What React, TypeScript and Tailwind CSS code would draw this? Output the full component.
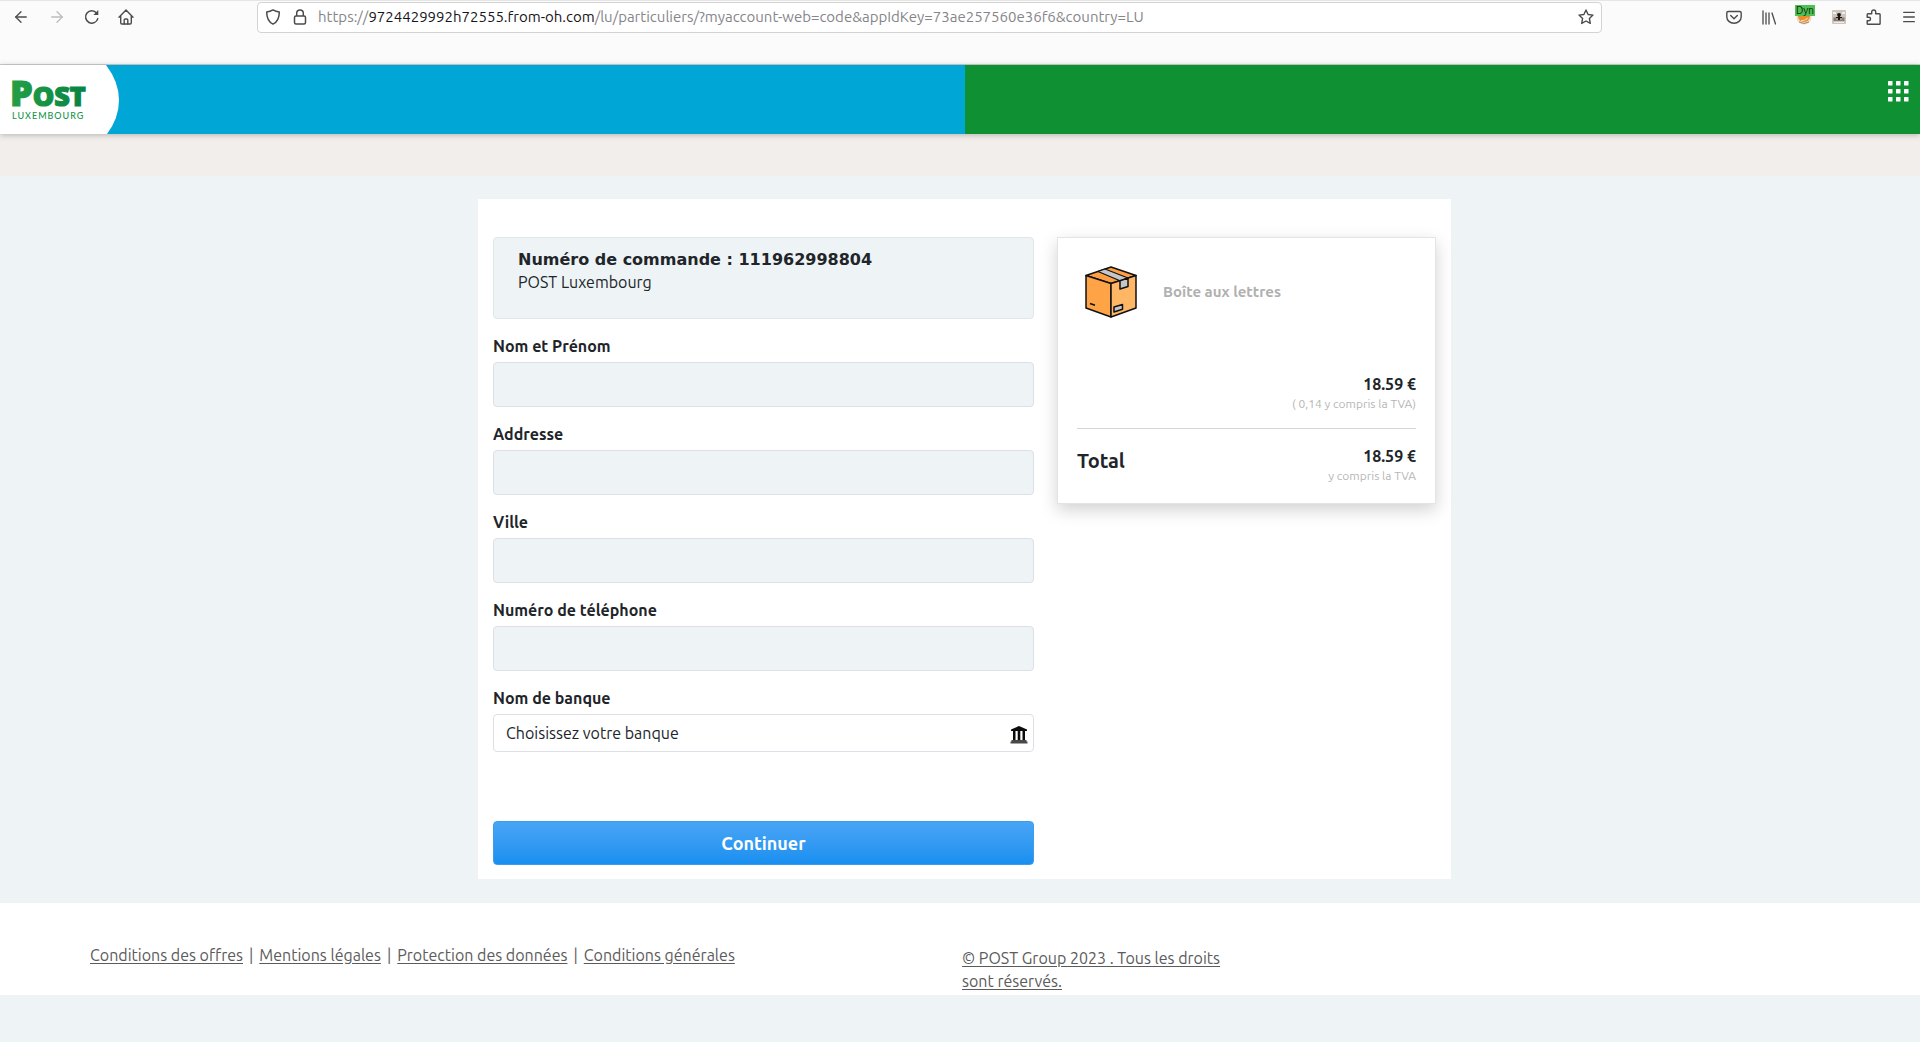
import React from "react";
import { ArrowLeft, ArrowRight, Menu } from "lucide-react";

const FIELDS = [
  { id: "name", label: "Nom et Prénom" },
  { id: "address", label: "Addresse" },
  { id: "city", label: "Ville" },
  { id: "phone", label: "Numéro de téléphone" },
];

const FOOTER_LINKS = [
  "Conditions des offres",
  "Mentions légales",
  "Protection des données",
  "Conditions générales",
];

function ReloadIcon() {
  return (
    <svg viewBox="0 0 16 16" className="w-4 h-4" fill="none" stroke="currentColor" strokeWidth="1.5" strokeLinecap="round">
      <path d="M13.8 9.6A6.2 6.2 0 1 1 12.6 4" />
      <path d="M14.3 1v5H9.4z" fill="currentColor" stroke="none" />
    </svg>
  );
}

function HomeIcon() {
  return (
    <svg viewBox="0 0 16 16" className="w-4 h-4" fill="none" stroke="currentColor" strokeWidth="1.4" strokeLinejoin="round" strokeLinecap="round">
      <path d="M1 8.2L8 1l7 7.2M2.7 7v6.8q0 1.2 1.2 1.2h8.2q1.2 0 1.2-1.2V7" />
      <path d="M6.2 15v-4q0-1 1-1h1.6q1 0 1 1v4" />
    </svg>
  );
}

function ShieldIcon() {
  return (
    <svg viewBox="0 0 16 16" className="w-4 h-4" fill="none" stroke="currentColor" strokeWidth="1.5" strokeLinejoin="round">
      <path d="M8 .9c2 1.3 4 1.9 6.3 2 0 5.5-1 9.6-6.3 12.2C2.7 12.5 1.7 8.4 1.7 2.9 4 2.8 6 2.2 8 .9z" />
    </svg>
  );
}

function LockIcon() {
  return (
    <svg viewBox="0 0 16 16" className="w-4 h-4" fill="none" stroke="currentColor" strokeWidth="1.5">
      <rect x="2.5" y="7" width="11" height="8" rx="1.5" />
      <path d="M4.7 7V4.2a3.3 3.3 0 0 1 6.6 0V7" />
    </svg>
  );
}

function StarIcon() {
  return (
    <svg viewBox="0 0 16 16" className="w-4 h-4" fill="none" stroke="currentColor" strokeWidth="1.4" strokeLinejoin="round">
      <path d="M8 1l2.1 4.5 4.9.6-3.6 3.4.9 4.9L8 12l-4.3 2.4.9-4.9L1 6.1l4.9-.6z" />
    </svg>
  );
}

function PocketIcon() {
  return (
    <svg viewBox="0 0 16 16" className="w-4 h-4" fill="none" stroke="currentColor" strokeWidth="1.4" strokeLinecap="round" strokeLinejoin="round">
      <path d="M2.2 2.5h11.6q1.4 0 1.4 1.4v3.8a7.2 6.6 0 0 1-14.4 0V3.9q0-1.4 1.4-1.4z" />
      <path d="M4.7 6.5L8 9.7l3.3-3.2" />
    </svg>
  );
}

function LibraryIcon() {
  return (
    <svg viewBox="0 0 16 16" className="w-4 h-4" fill="none" stroke="currentColor" strokeWidth="1.3" strokeLinecap="round">
      <path d="M2 2v13M5 4v11M8 4v11M11 4l3.5 11" />
    </svg>
  );
}

function MonkeyIcon() {
  return (
    <svg viewBox="0 0 16 16" className="w-4 h-4">
      <circle cx="8" cy="8" r="7.5" fill="#ead9c8" />
      <circle cx="8" cy="7" r="6" fill="#ee8d27" />
      <path d="M5 11.5q4 1 6.5-2.5" fill="none" stroke="#f7d9b4" strokeWidth="1.2" />
      <path d="M3 13q5 3 10 0" fill="none" stroke="#a98a72" />
    </svg>
  );
}

function SpyIcon() {
  return (
    <svg viewBox="0 0 16 16" className="w-4 h-4">
      <rect x="1" y="1" width="14" height="14" rx="1" fill="#cfc4bc" />
      <path d="M2 3h3v2H2zM11 3h3v2h-3zM3 13h10v1H3z" fill="#f3eeea" />
      <path d="M2.5 8.5H5v2h6v-2h2.500V12h-11z" fill="#857a74" />
      <circle cx="8" cy="5.8" r="1.9" fill="#171717" />
      <path d="M7 6h2v5H7zM5 8h6v1.300H5z" fill="#171717" />
    </svg>
  );
}

function PuzzleIcon() {
  return (
    <svg viewBox="0 0 16 16" className="w-4 h-4" fill="none" stroke="currentColor" strokeWidth="1.4" strokeLinejoin="round">
      <path d="M2 15.2q-.8 0-.8-.8v-2.7h1.6a1.7 1.7 0 0 0 0-3.500H1.2V5.500q0-.8.8-.8h3.700V3a2 2 0 0 1 4 0v1.700h3.600q.8 0 .8.8v8.900q0 .8-.8.8z" />
    </svg>
  );
}

function AppsIcon() {
  return (
    <svg viewBox="0 0 21 21" className="w-[21px] h-[21px]" fill="#fff">
      {[0, 8, 16].map((y) =>
        [0, 8, 16].map((x) => <rect key={`${x}-${y}`} x={x} y={y} width="4.5" height="4.5" rx=".5" />)
      )}
    </svg>
  );
}

function PostLogo() {
  return (
    <svg viewBox="0 0 120 69" className="w-[120px] h-[69px]" role="img" aria-label="POST Luxembourg">
      <defs>
        <linearGradient id="logo" x1="0" x2="1">
          <stop offset="0" stopColor="#23a045" />
          <stop offset="1" stopColor="#078344" />
        </linearGradient>
      </defs>
      <path d="M0 0H106Q119 17 119 35T107 69H0z" fill="#fff" />
      <text x="10" y="41" fontFamily="'Open Sans', sans-serif" fontWeight="800" fill="url(#logo)" stroke="url(#logo)" strokeWidth="1.2">
        <tspan fontSize="36">P</tspan>
        <tspan fontSize="27">OST</tspan>
      </text>
      <text x="12" y="54" fontFamily="Lato, sans-serif" fontSize="9" fontWeight="500" letterSpacing="1" fill="#16954a">
        LUXEMBOURG
      </text>
    </svg>
  );
}

function ParcelIcon() {
  return (
    <svg viewBox="0 0 52 52" className="w-[52px] h-[52px]" stroke="#111" strokeLinejoin="round">
      <path d="M1 9.5L26 1l25 8.5L26 17.5z" fill="#ff9f43" strokeWidth="1.5" />
      <path d="M1 9.5l25 8V51L1 42z" fill="#ffa347" strokeWidth="1.5" />
      <path d="M51 9.5l-25 8V51l25-9z" fill="#ffb766" strokeWidth="1.5" />
      <path d="M13 5.5L20 3l23 9-8 2.7z" fill="#c5c6ca" strokeWidth="1.2" />
      <path d="M35 14.7l8-2.7v8.5L35 23z" fill="#c5c6ca" strokeWidth="1.5" />
      <path d="M29 41l8.5-2.5v4.7L29 46z" fill="#c5c6ca" strokeWidth="1.5" />
      <path d="M5 37.5l5 1.7" fill="none" strokeWidth="1.7" />
    </svg>
  );
}

function BankIcon() {
  return (
    <svg viewBox="0 0 18 18" className="w-[18px] h-[18px]">
      <path d="M9 0L17 3.5V5H1V3.5zM3 5h2.500v9H3zM7.7 5h2.600v9H7.7zM12.5 5H15v9h-2.500z" fill="#0c0c0c" />
      <path d="M1.5 14h15v1.500h-15zM.5 15.500h17v2H.5z" fill="#484848" />
    </svg>
  );
}

function BrowserBar() {
  return (
    <div className="h-[65px] bg-[#fbfbfb] border-t border-b border-t-[#e6e6e6] border-b-[#cfcfcf] text-[#4b4b4f]">
      <div className="h-8 flex items-center">
        <div className="w-[257px] flex items-center gap-[18px] pl-3 shrink-0">
          <button aria-label="Back"><ArrowLeft className="w-[18px] h-[18px]" strokeWidth={1.75} /></button>
          <button aria-label="Forward" className="text-[#bdbdbf]"><ArrowRight className="w-[18px] h-[18px]" strokeWidth={1.75} /></button>
          <button aria-label="Reload"><ReloadIcon /></button>
          <button aria-label="Home"><HomeIcon /></button>
        </div>
        <div className="flex-1 h-[31px] flex items-center px-[7px] bg-white border border-[#d3d3d4] rounded">
          <div className="flex gap-[11px] mr-[10px]">
            <ShieldIcon />
            <LockIcon />
          </div>
          <div className="flex-1 text-[15px] whitespace-nowrap text-[#85858a]">
            https://<span className="text-[#15141a]">9724429992h72555.from-oh.com</span>
            /lu/particuliers/?myaccount-web=code&appIdKey=73ae257560e36f6&country=LU
          </div>
          <button aria-label="Bookmark"><StarIcon /></button>
        </div>
        <div className="w-[318px] flex items-center justify-end gap-[19px] pr-[3px] shrink-0">
          <button aria-label="Pocket"><PocketIcon /></button>
          <button aria-label="Library"><LibraryIcon /></button>
          <button aria-label="Monkey" className="relative">
            <MonkeyIcon />
            <span className="absolute -top-1 -left-px px-px h-[11px] bg-[#4fc152] font-['Liberation_Sans'] text-[10px] leading-[11px] text-[#123312]">Dyn</span>
          </button>
          <button aria-label="Spy"><SpyIcon /></button>
          <button aria-label="Extensions"><PuzzleIcon /></button>
          <button aria-label="Menu"><Menu className="w-4 h-4" strokeWidth={2} /></button>
        </div>
      </div>
    </div>
  );
}

function Header() {
  return (
    <header className="relative h-[69px] flex bg-[#0e9033] shadow-[0_1px_6px_rgba(0,0,0,0.25)]">
      <div className="w-[calc(50%+5px)] bg-[#00a6d6]">
        <PostLogo />
      </div>
      <div className="flex-1 flex justify-end items-start pt-4 pr-[11px]">
        <button aria-label="Applications"><AppsIcon /></button>
      </div>
    </header>
  );
}

function OrderForm() {
  return (
    <form className="w-[541px]" onSubmit={(e) => e.preventDefault()}>
      <div className="h-[82px] pl-6 pt-[10px] mb-4 bg-[#eef3f6] border border-[#e2e5ea] rounded">
        <p className="font-['DejaVu_Sans'] font-bold leading-[23px]">Numéro de commande : 111962998804</p>
        <p className="leading-[23px]">POST Luxembourg</p>
      </div>
      {FIELDS.map((field) => (
        <div key={field.id} className="mb-4">
          <label htmlFor={field.id} className="block h-[27px] leading-[23px] font-semibold">{field.label}</label>
          <input id={field.id} type="text" className="block w-full h-[45px] px-3 bg-[#eef3f6] border border-[#dcdfe6] rounded" />
        </div>
      ))}
      <label htmlFor="bank" className="block h-[27px] leading-[23px] font-semibold">Nom de banque</label>
      <div className="relative">
        <select id="bank" className="block w-full h-[38px] px-3 appearance-none bg-white border border-[#dcdfe6] rounded">
          <option>Choisissez votre banque</option>
        </select>
        <span className="absolute right-[6px] top-3 pointer-events-none"><BankIcon /></span>
      </div>
      <button
        type="submit"
        className="block w-full h-11 mt-[69px] rounded-sm border border-[#3a9df0] bg-linear-to-b from-[#48a5f5] to-[#178ff0] text-white text-lg font-bold"
      >
        Continuer
      </button>
    </form>
  );
}

function Summary() {
  return (
    <aside className="w-[379px] h-[267px] px-[19px] pt-7 bg-white border border-[#e4e4e4] shadow-[0_6px_16px_rgba(0,0,0,0.18)]">
      <div className="flex items-center gap-[26px] h-[52px] pl-2">
        <ParcelIcon />
        <span className="text-[15px] font-bold text-[#b0b0b0]">Boîte aux lettres</span>
      </div>
      <div className="mt-14 pb-[14px] border-b border-[#d6d6d6] text-right">
        <p className="h-5 leading-[20px] font-bold">18.59 €</p>
        <p className="h-5 leading-[20px] text-xs text-[#b5b5b5]">( 0,14 y compris la TVA)</p>
      </div>
      <div className="mt-[17px] flex justify-between">
        <p className="text-xl leading-[30px] font-semibold">Total</p>
        <div className="text-right">
          <p className="h-5 leading-[20px] font-bold">18.59 €</p>
          <p className="h-5 leading-[20px] text-xs text-[#b5b5b5]">y compris la TVA</p>
        </div>
      </div>
    </aside>
  );
}

export default function App() {
  return (
    <div className="min-h-screen bg-[#eef3f6] font-['Ubuntu','Noto_Sans',sans-serif] text-base text-[#212529]">
      <BrowserBar />
      <Header />
      <div className="h-[42px] bg-[#f2eeeb]" />
      <main className="pl-[9px] pt-[23px] pb-6">
        <div className="w-[973px] mx-auto flex justify-between items-start px-[15px] pt-[38px] pb-[14px] bg-white">
          <OrderForm />
          <Summary />
        </div>
      </main>
      <footer className="h-[92px] flex items-start pl-[90px] pt-[41px] bg-white text-[#5b5b5b]">
        <nav className="w-[872px] flex gap-1.5 leading-[23px]">
          {FOOTER_LINKS.map((link, i) => (
            <React.Fragment key={link}>
              {i > 0 && <span>|</span>}
              <a href="#" className="underline underline-offset-2">{link}</a>
            </React.Fragment>
          ))}
        </nav>
        <a href="#" className="w-[265px] pt-[3px] leading-[23px] underline underline-offset-2">
          © POST Group 2023 . Tous les droits sont réservés.
        </a>
      </footer>
    </div>
  );
}
